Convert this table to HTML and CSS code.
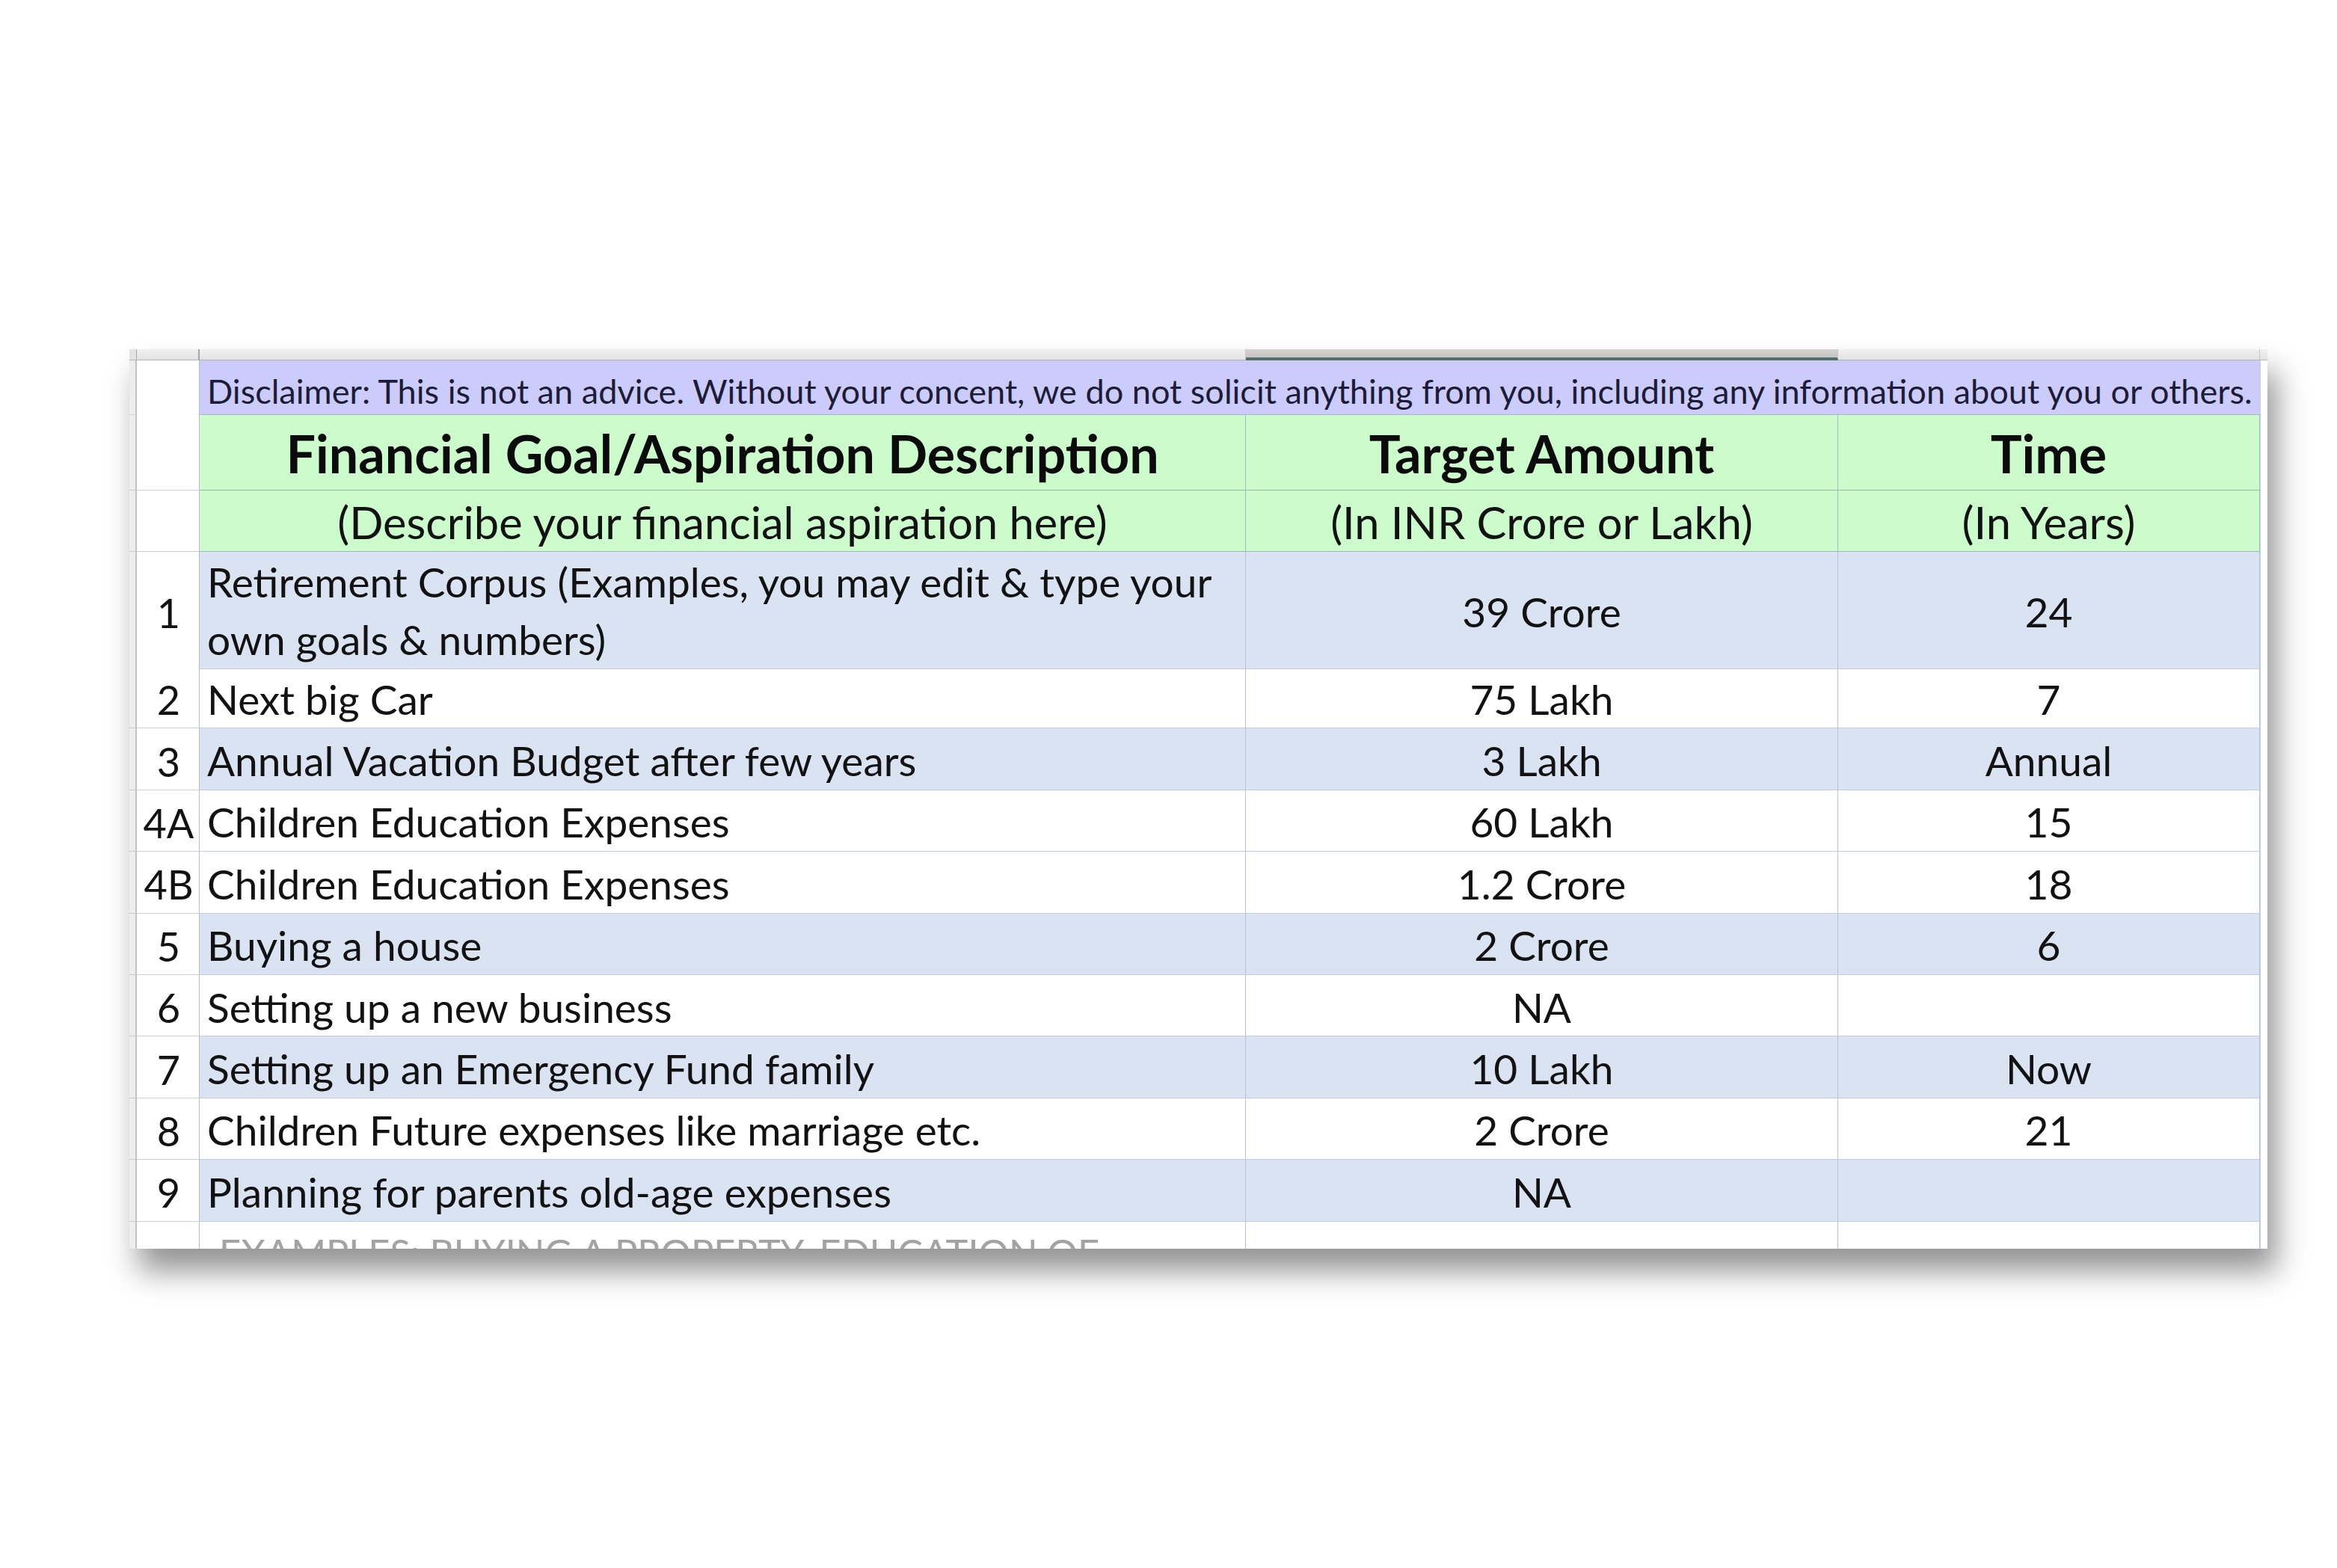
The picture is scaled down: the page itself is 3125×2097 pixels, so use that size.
FILE: index.html
```html
<!DOCTYPE html>
<html lang="en">
<head>
<meta charset="utf-8">
<title>Financial Goals</title>
<link rel="stylesheet" href="styles.css">
</head>
<body>
<div class="page">
  <div class="sheet">
    <div class="row strip">
      <div class="ruler"></div>
      <div class="s-cell s-num"></div>
      <div class="s-cell"></div>
      <div class="s-cell s-sel"></div>
      <div class="s-cell"></div>
      <div class="s-cell s-end"></div>
    </div>
    <div class="row disc-row">
      <div class="ruler tick"></div>
      <div class="num no-line"></div>
      <div class="disc">Disclaimer: This is not an advice. Without your concent, we do not solicit anything from you, including any information about you or others.</div>
      <div class="end"></div>
    </div>
    <div class="row head-row">
      <div class="ruler"></div>
      <div class="num"></div>
      <div class="cell green c1 title">Financial Goal/Aspiration Description</div>
      <div class="cell green title">Target Amount</div>
      <div class="cell green title">Time</div>
      <div class="end"></div>
    </div>
    <div class="row sub-row">
      <div class="ruler"></div>
      <div class="num"></div>
      <div class="cell green c1 sub">(Describe your financial aspiration here)</div>
      <div class="cell green sub">(In INR Crore or Lakh)</div>
      <div class="cell green sub">(In Years)</div>
      <div class="end"></div>
    </div>
    <div class="row data tall blue">
      <div class="ruler"></div>
      <div class="num">1</div>
      <div class="cell left two">Retirement Corpus (Examples, you may edit &amp; type your<br>own goals &amp; numbers)</div>
      <div class="cell">39 Crore</div>
      <div class="cell">24</div>
      <div class="end"></div>
    </div>
    <div class="row data">
      <div class="ruler"></div>
      <div class="num">2</div>
      <div class="cell left">Next big Car</div>
      <div class="cell">75 Lakh</div>
      <div class="cell">7</div>
      <div class="end"></div>
    </div>
    <div class="row data blue">
      <div class="ruler"></div>
      <div class="num">3</div>
      <div class="cell left">Annual Vacation Budget after few years</div>
      <div class="cell">3 Lakh</div>
      <div class="cell">Annual</div>
      <div class="end"></div>
    </div>
    <div class="row data">
      <div class="ruler"></div>
      <div class="num">4A</div>
      <div class="cell left">Children Education Expenses</div>
      <div class="cell">60 Lakh</div>
      <div class="cell">15</div>
      <div class="end"></div>
    </div>
    <div class="row data">
      <div class="ruler"></div>
      <div class="num">4B</div>
      <div class="cell left">Children Education Expenses</div>
      <div class="cell">1.2 Crore</div>
      <div class="cell">18</div>
      <div class="end"></div>
    </div>
    <div class="row data blue">
      <div class="ruler"></div>
      <div class="num">5</div>
      <div class="cell left">Buying a house</div>
      <div class="cell">2 Crore</div>
      <div class="cell">6</div>
      <div class="end"></div>
    </div>
    <div class="row data">
      <div class="ruler"></div>
      <div class="num">6</div>
      <div class="cell left">Setting up a new business</div>
      <div class="cell">NA</div>
      <div class="cell"></div>
      <div class="end"></div>
    </div>
    <div class="row data blue">
      <div class="ruler"></div>
      <div class="num">7</div>
      <div class="cell left">Setting up an Emergency Fund family</div>
      <div class="cell">10 Lakh</div>
      <div class="cell">Now</div>
      <div class="end"></div>
    </div>
    <div class="row data">
      <div class="ruler"></div>
      <div class="num">8</div>
      <div class="cell left">Children Future expenses like marriage etc.</div>
      <div class="cell">2 Crore</div>
      <div class="cell">21</div>
      <div class="end"></div>
    </div>
    <div class="row data blue">
      <div class="ruler"></div>
      <div class="num">9</div>
      <div class="cell left">Planning for parents old-age expenses</div>
      <div class="cell">NA</div>
      <div class="cell"></div>
      <div class="end"></div>
    </div>
    <div class="row data last">
      <div class="ruler"></div>
      <div class="num"></div>
      <div class="cell left faded">EXAMPLES: BUYING A PROPERTY, EDUCATION OF</div>
      <div class="cell"></div>
      <div class="cell"></div>
      <div class="end"></div>
    </div>
  </div>
</div>
</body>
</html>
```
FILE: styles.css
```css
html, body {
  margin: 0;
  padding: 0;
  background: #ffffff;
}

body {
  font-family: "Lato", "Liberation Sans", sans-serif;
  color: #121212;
  width: 3125px;
  height: 2097px;
  overflow: hidden;
}

.page {
  padding: 467px 0 0 173px;
}

.sheet {
  width: 2859px;
  height: 1203px;
  overflow: hidden;
  background: #ffffff;
  box-shadow: 12px 30px 38px rgba(0, 0, 0, 0.42);
}

.row {
  display: grid;
  grid-template-columns: 10px 84px 1399px 792px 564px 10px;
  box-sizing: border-box;
}

.row > div {
  box-sizing: border-box;
}

/* top column-header strip */
.strip {
  height: 15px;
}
.strip .ruler {
  background: #e4e4e4;
  border-right: 1px solid #a9a9a9;
  border-bottom: 1px solid #b5b5b5;
}
.s-cell {
  background: linear-gradient(#f1f1f1, #e2e2e2);
  border-right: 1px solid #c9c9c9;
  border-bottom: 1px solid #b5b5b5;
}
.s-num {
  border-right: 2px solid #a8a8a8;
}
.s-sel {
  background: linear-gradient(#d6d3d3, #c7c3c3);
  border-bottom: 4px solid #52706a;
}
.s-end {
  border-right: none;
}

/* left ruler edge */
.ruler {
  background: #ededed;
  border-right: 2px solid #c3c3c3;
  border-bottom: 1px solid #c8c8c8;
}

.num {
  background: #ffffff;
  border-right: 1px solid #b3bfd6;
  border-bottom: 1px solid #cfcfcf;
  display: flex;
  align-items: center;
  justify-content: center;
  font-size: 54px;
  padding: 6px 0 0 2px;
  white-space: nowrap;
}
.num.no-line {
  border-bottom: none;
}
.disc-row .ruler {
  border-bottom: 1px solid #d4d4d4;
}

.end {
  background: #ffffff;
  border-left: 1px solid #c7d2e6;
}

/* disclaimer */
.disc-row {
  height: 73px;
}
.disc {
  grid-column: span 3;
  background: #ccccfc;
  border-bottom: 1px solid #a9b7c4;
  display: flex;
  align-items: center;
  padding: 8px 0 0 10px;
  font-size: 45.1px;
  color: #1c1c38;
  white-space: nowrap;
  overflow: hidden;
}

/* header rows */
.cell {
  display: flex;
  align-items: center;
  justify-content: center;
  border-right: 1px solid #b4c2df;
  border-bottom: 1px solid #c3cde0;
  white-space: nowrap;
}
.green {
  background: #ccfccc;
  border-right: 1px solid #a6bcc4;
  border-bottom: 1px solid #9fb3ae;
}
.head-row {
  height: 101px;
}
.sub-row {
  height: 82px;
}
.title {
  font-weight: 700;
  font-size: 70px;
  color: #0b0b0b;
  padding-top: 2px;
}
.sub {
  font-size: 59.6px;
  padding-top: 2px;
}
.sub-row .cell {
  border-bottom: 1px solid #a6b5c4;
}

/* data rows */
.data {
  height: 82.4px;
}
.data .cell {
  font-size: 55px;
  padding-top: 4px;
}
.data .cell.left {
  justify-content: flex-start;
  padding-left: 10px;
}
.blue .cell {
  background: #dae3f1;
}
.tall {
  height: 154px;
}
.data .cell.two {
  line-height: 77px;
  padding-top: 2px;
  align-items: center;
}
.last {
  height: 60px;
}
.last .cell,
.last .num {
  align-items: flex-start;
  border-bottom: none;
}
.data .cell.faded {
  color: #a3a3a3;
  padding-top: 10px;
  padding-left: 26px;
  font-size: 50.5px;
}
```
